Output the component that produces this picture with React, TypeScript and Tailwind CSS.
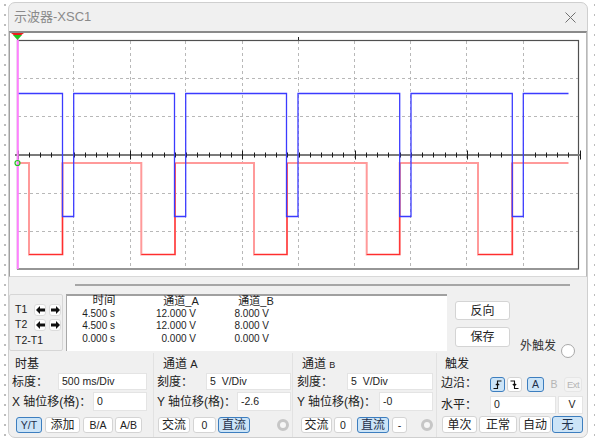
import React from 'react';

// grid positions on the scope face (page coordinates)
const gridX = [73.5, 130.5, 185.5, 242.5, 298.5, 354.5, 410.5, 466.5, 523.5];
const gridY = [78.5, 116.5, 193.5, 231.5];

const bluePath =
  'M17.5,93.5 H62.5 V216.5 H73.7 V93.5 H174.5 V216.5 H185.7 V93.5 H286.5 V216.5 H298 V93.5 H399.7 V216.5 H411 V93.5 H512.3 V216.5 H523.3 V93.5 H568.5';
const redPath =
  'M17.5,163 H29 V254.5 H62.5 V163 H141.3 V254.5 H175 V163 H254 V254.5 H287 V163 H366.7 V254.5 H399.7 V163 H478 V254.5 H512.3 V163 H568.5';
const redLow =
  'M29,254.5 H62.5 V163 M141.3,254.5 H175 V163 M254,254.5 H287 V163 M366.7,254.5 H399.7 V163 M478,254.5 H512.3 V163';

function Scope() {
  const ticks = Array.from({ length: 51 }, (_, i) => 17.5 + 11.24 * i);
  return (
    <svg width={576} height={243} viewBox="10 33 576 243" className="block">
      <rect x={10} y={33} width={576} height={243} fill="#ffffff" />
      {gridX.map((x) => (
        <line key={x} x1={x} x2={x} y1={41} y2={268.5} stroke="#b8b8b8" strokeDasharray="3 3" />
      ))}
      {gridY.map((y) => (
        <line key={y} x1={18} x2={578} y1={y} y2={y} stroke="#b8b8b8" strokeDasharray="3 3" />
      ))}
      <rect x={17.5} y={40.5} width={561} height={228.5} fill="none" stroke="#505050" strokeWidth={1.2} />
      <line x1={298.5} x2={298.5} y1={37} y2={40} stroke="#222" />
      <line x1={15} x2={581} y1={155} y2={155} stroke="#7a7a7a" strokeWidth={2} />
      {ticks.map((x, i) => (
        <line
          key={i}
          x1={Math.round(x) + 0.5}
          x2={Math.round(x) + 0.5}
          y1={i % 10 === 0 ? 150.5 : 152.5}
          y2={i % 10 === 0 ? 159.5 : 157.5}
          stroke="#1a1a1a"
        />
      ))}
      <path d={redPath} fill="none" stroke="#ff9a9a" strokeWidth={2} />
      <path d={redLow} fill="none" stroke="#ff2e2e" strokeWidth={1.2} />
      <path d={bluePath} fill="none" stroke="#3b3bff" strokeWidth={1.3} />
      <line x1={17.8} x2={17.8} y1={39} y2={269} stroke="#ff80ff" strokeWidth={2} />
      <polygon points="11,33 24,33 17.5,38" fill="#ee1c1c" />
      <polygon points="13,35 22,35 17.5,40" fill="#22c322" />
      <circle cx={17.5} cy={163} r={2.5} fill="none" stroke="#22c322" strokeWidth={1.2} />
    </svg>
  );
}

function Btn({
  children,
  on,
  dim,
  className = '',
}: {
  children: React.ReactNode;
  on?: boolean;
  dim?: boolean;
  className?: string;
}) {
  return (
    <div
      className={`flex shrink-0 items-center justify-center rounded-[3px] border leading-none ${
        on
          ? 'border-[#3d7ebf] bg-[#cce4f7] text-[#1d2f4a]'
          : dim
          ? 'border-[#e6e6e6] bg-[#f4f4f4] text-[#b5b5b5]'
          : 'border-[#d4d4d4] bg-white text-[#222]'
      } ${className}`}
    >
      {children}
    </div>
  );
}

function Field({ value, className = '' }: { value: string; className?: string }) {
  return (
    <div
      className={`flex shrink-0 items-center border border-[#e4e4e4] bg-white pl-[3px] text-[10.5px] text-[#222] ${className}`}
    >
      {value}
    </div>
  );
}

function Ring() {
  return <div className="h-[12px] w-[12px] shrink-0 rounded-full border-[3px] border-[#c6c6c6] bg-[#f6f6f6]" />;
}

function Arrow({ dir }: { dir: 'l' | 'r' }) {
  return (
    <div className="flex h-[12px] w-[12px] items-center justify-center rounded-[3px] border border-[#dcdcdc] bg-white">
      <svg width={9} height={8} viewBox="0 0 9 8">
        <polygon
          points={dir === 'l' ? '0,4 4,0 4,2.5 9,2.5 9,5.5 4,5.5 4,8' : '9,4 5,0 5,2.5 0,2.5 0,5.5 5,5.5 5,8'}
          fill="#111"
        />
      </svg>
    </div>
  );
}

export default function App() {
  return (
    <div className="h-[444px] w-[595px] overflow-hidden bg-white bg-[radial-gradient(circle,#bdbdbd_0.8px,transparent_1.2px)] bg-[length:10px_10px] pl-[8px] pt-[2px] font-['Liberation_Sans','Noto_Sans_CJK_SC',sans-serif]">
      <div className="flex h-[436px] w-[580px] flex-col overflow-hidden rounded-[7px] border border-[#cfcfcf] bg-[#f0f0f0]">
        {/* title bar */}
        <div className="flex h-[28px] shrink-0 items-center justify-between pl-[5px] pr-[11px]">
          <span className="text-[13px] text-[#8a8a8a]">示波器-XSC1</span>
          <svg width={11} height={11} viewBox="0 0 11 11">
            <path d="M0.5 0.5 L10.5 10.5 M10.5 0.5 L0.5 10.5" stroke="#707070" strokeWidth={1} />
          </svg>
        </div>

        {/* screen */}
        <div className="shrink-0 border-b border-l border-r border-t-2 border-b-[#d8d8d8] border-l-[#a0a0a0] border-r-[#b8b8b8] border-t-[#8a8a8a]">
          <Scope />
        </div>

        {/* scroll bar */}
        <div className="flex h-[16px] shrink-0 items-center">
          <div className="ml-[66px] h-[2px] w-[495px] bg-[#a6a6a6]" />
        </div>

        {/* cursor readout */}
        <div className="mt-[1px] flex h-[57px] shrink-0 items-stretch">
          <div className="flex w-[54px] flex-col rounded-[2px] border border-[#d6d6d6] pl-[5px] text-[10.5px] text-[#222]">
            <div className="mt-[8px] flex h-[13px] items-center">
              <span className="w-[19px]">T1</span>
              <div className="flex gap-[3px]">
                <Arrow dir="l" />
                <Arrow dir="r" />
              </div>
            </div>
            <div className="mt-[2px] flex h-[13px] items-center">
              <span className="w-[19px]">T2</span>
              <div className="flex gap-[3px]">
                <Arrow dir="l" />
                <Arrow dir="r" />
              </div>
            </div>
            <div className="mt-[4px] leading-none">T2-T1</div>
          </div>

          <div className="ml-[3px] flex w-[381px] flex-col border-l border-t-2 border-l-[#a8a8a8] border-t-[#a0a0a0] bg-white text-[#1e1e1e]">
            <div className="mt-[-1px] flex h-[12px] items-center text-[11.5px]">
              <span className="w-[74px] text-center">时间</span>
              <span className="w-[80px] text-center text-[11px]">通道_A</span>
              <span className="w-[70px] text-center text-[11px]">通道_B</span>
            </div>
            {[
              ['4.500 s', '12.000 V', '8.000 V'],
              ['4.500 s', '12.000 V', '8.000 V'],
              ['0.000 s', '0.000 V', '0.000 V'],
            ].map((r, i) => (
              <div key={i} className="flex h-[12.5px] items-center text-[10px]">
                <span className="w-[48px] text-right">{r[0]}</span>
                <span className="w-[81px] text-right">{r[1]}</span>
                <span className="w-[73px] text-right">{r[2]}</span>
              </div>
            ))}
          </div>

          <div className="ml-[8px] flex w-[55px] flex-col pt-[7px] text-[12px]">
            <Btn className="h-[19px] w-[55px]">反向</Btn>
            <Btn className="mt-[7px] h-[20px] w-[55px]">保存</Btn>
          </div>

          <div className="mb-[-7px] ml-[10px] flex items-end gap-[5px] self-end">
            <span className="mb-[3px] text-[12px] text-[#333]">外触发</span>
            <div className="h-[14px] w-[14px] rounded-full border border-[#a8a8a8] bg-white" />
          </div>
        </div>

        {/* control groups */}
        <div className="mt-[2px] flex flex-1 text-[12px] text-[#222]">
          {/* 时基 */}
          <div className="flex w-[144px] flex-col pl-[3px] pt-[4px]">
            <div className="h-[14px] pl-[3px] leading-[14px]">时基</div>
            <div className="mt-[2px] flex h-[17px] items-center">
              <span className="w-[46px]">标度：</span>
              <Field value="500 ms/Div" className="h-[17px] w-[89px]" />
            </div>
            <div className="mt-[2px] flex h-[19px] items-center">
              <span className="w-[81px] whitespace-nowrap">X 轴位移(格)：</span>
              <Field value="0" className="h-[19px] w-[54px]" />
            </div>
            <div className="mt-[6px] flex h-[16px] pl-[4px] text-[10.5px]">
              <Btn on className="h-[16px] w-[26px]">Y/T</Btn>
              <Btn className="ml-[3px] h-[16px] w-[35px] text-[12px]">添加</Btn>
              <Btn className="ml-[3px] h-[16px] w-[30px]">B/A</Btn>
              <Btn className="ml-[2px] h-[16px] w-[27px]">A/B</Btn>
            </div>
          </div>

          {/* 通道 A */}
          <div className="flex w-[139px] flex-col border-l border-[#e2e2e2] pl-[3px] pt-[4px]">
            <div className="h-[14px] pl-[6px] leading-[14px]">
              通道 <span className="text-[11px]">A</span>
            </div>
            <div className="mt-[2px] flex h-[17px] items-center">
              <span className="w-[49px]">刻度：</span>
              <Field value="5  V/Div" className="h-[17px] w-[85px] whitespace-pre" />
            </div>
            <div className="mt-[2px] flex h-[19px] items-center">
              <span className="w-[80px] whitespace-nowrap">Y 轴位移(格)：</span>
              <Field value="-2.6" className="h-[19px] w-[54px]" />
            </div>
            <div className="mt-[6px] flex h-[16px] items-center pl-[1px]">
              <Btn className="h-[16px] w-[32px]">交流</Btn>
              <Btn className="ml-[3px] h-[16px] w-[23px] text-[10.5px]">0</Btn>
              <Btn on className="ml-[2px] h-[16px] w-[32px]">直流</Btn>
              <div className="ml-[27px]">
                <Ring />
              </div>
            </div>
          </div>

          {/* 通道 B */}
          <div className="flex w-[144px] flex-col border-l border-[#e2e2e2] pl-[4px] pt-[4px]">
            <div className="h-[14px] pl-[5px] leading-[14px]">
              通道 <span className="text-[9px]">B</span>
            </div>
            <div className="mt-[2px] flex h-[17px] items-center">
              <span className="w-[50px]">刻度：</span>
              <Field value="5  V/Div" className="h-[17px] w-[86px] whitespace-pre" />
            </div>
            <div className="mt-[2px] flex h-[19px] items-center">
              <span className="w-[82px] whitespace-nowrap">Y 轴位移(格)：</span>
              <Field value="-0" className="h-[19px] w-[54px]" />
            </div>
            <div className="mt-[6px] flex h-[16px] items-center pl-[4px]">
              <Btn className="h-[16px] w-[31px]">交流</Btn>
              <Btn className="ml-[2px] h-[16px] w-[18px] text-[10.5px]">0</Btn>
              <Btn on className="ml-[5px] h-[16px] w-[32px]">直流</Btn>
              <Btn className="ml-[3px] h-[16px] w-[15px] text-[10.5px]">-</Btn>
              <div className="ml-[14px]">
                <Ring />
              </div>
            </div>
          </div>

          {/* 触发 */}
          <div className="flex w-[150px] flex-col border-l border-[#e2e2e2] pl-[4px] pt-[4px]">
            <div className="h-[14px] pl-[4px] leading-[14px]">触发</div>
            <div className="mt-[2px] flex h-[19px] items-center">
              <span className="w-[49px]">边沿：</span>
              <div className="flex items-center self-end">
                <Btn on className="h-[15px] w-[15px]">
                  <svg width={11} height={11} viewBox="0 0 11 11">
                    <path d="M1.5 9.5 H5.5 V2 H9.5 M3.8 6.2 L5.5 4.5 L7.2 6.2" fill="none" stroke="#111" strokeWidth={1.1} />
                  </svg>
                </Btn>
                <Btn className="ml-[2px] h-[15px] w-[15px]">
                  <svg width={11} height={11} viewBox="0 0 11 11">
                    <path d="M1.5 2 H5.5 V9.5 H9.5 M3.8 5 L5.5 6.7 L7.2 5" fill="none" stroke="#111" strokeWidth={1.1} />
                  </svg>
                </Btn>
                <Btn on className="ml-[5px] h-[15px] w-[17px] text-[10.5px]">A</Btn>
                <div className="ml-[4px] flex h-[15px] w-[12px] items-center justify-center text-[10.5px] text-[#b5b5b5]">
                  B
                </div>
                <Btn dim className="ml-[4px] h-[15px] w-[18px] text-[9.5px] tracking-[-0.5px]">Ext</Btn>
              </div>
            </div>
            <div className="mt-[4px] flex h-[18px] items-center">
              <span className="w-[49px]">水平：</span>
              <Field value="0" className="h-[18px] w-[66px]" />
              <Field value="V" className="ml-[2px] h-[18px] w-[25px] justify-center pl-0" />
            </div>
            <div className="mt-[2px] flex h-[17px] items-center pl-[1px]">
              <Btn className="h-[17px] w-[35px]">单次</Btn>
              <Btn className="ml-[2px] h-[17px] w-[38px]">正常</Btn>
              <Btn className="ml-[2px] h-[17px] w-[32px]">自动</Btn>
              <Btn on className="ml-[1px] h-[17px] w-[31px]">无</Btn>
            </div>
          </div>
        </div>
      </div>
    </div>
  );
}
